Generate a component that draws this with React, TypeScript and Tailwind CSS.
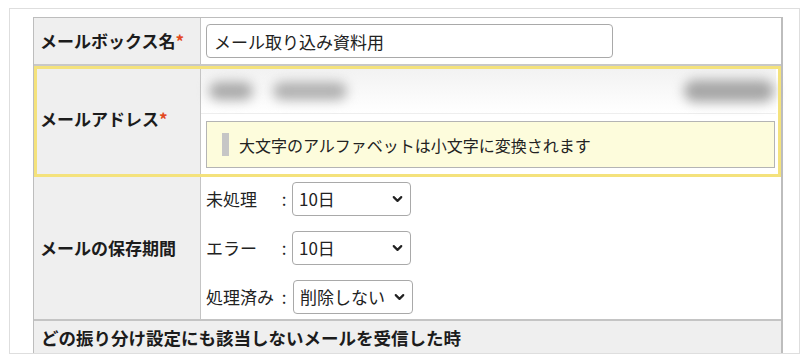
import { ChevronDown } from "lucide-react";

const font = { fontFamily: '"Noto Sans CJK JP", "Noto Sans", sans-serif' };

const Required = () => <span className="text-[#e2481e] font-bold">*</span>;

const PeriodSelect = ({ label, value, wide }: { label: string; value: string; wide?: boolean }) => (
    <div className="flex items-center h-[34px]">
        <span className="w-[72px] text-[17px] text-[#222] whitespace-nowrap">{label}</span>
        <span className="w-[12px] text-center text-[17px] text-[#222]">:</span>
        <div className={`relative h-[34px] ${wide ? "w-[120px] ml-[3px]" : "w-[119px] ml-[2px]"}`}>
            <select
                defaultValue={value}
                className="appearance-none w-full h-full border border-[#a9a9a9] rounded-[4px] bg-white pl-[6px] text-[17px] text-[#222] outline-none"
                style={font}
            >
                <option value={value}>{value}</option>
            </select>
            <ChevronDown className="absolute right-[6px] top-1/2 -translate-y-1/2 h-[15px] w-[15px] text-[#222] pointer-events-none" strokeWidth={3.5} />
        </div>
    </div>
);

const App = () => {
    return (
        <div className="min-h-screen bg-white pt-[8px] pl-[9px]" style={font}>
            {/* Card */}
            <div className="w-[791px] h-[346px] border border-[#dedede] overflow-hidden pl-[23px] pt-[8px]">
                <div className="w-[750px] border-l border-t border-r-2 border-[#bdbdbd]">
                    {/* Mailbox name */}
                    <div className="flex h-[48px] border-b-2 border-[#c8c8c8]">
                        <div className="w-[167px] shrink-0 bg-[#efefef] border-r border-[#c4c4c4] flex items-center pl-[6px] text-[17px] font-bold text-[#1c1c1c]">
                            メールボックス名<Required />
                        </div>
                        <div className="flex-1 flex items-center pl-[5px]">
                            <input
                                defaultValue="メール取り込み資料用"
                                className="w-[407px] h-[34px] border border-[#a9a9a9] rounded-[4px] px-[7px] text-[17px] text-[#222] outline-none"
                                style={font}
                            />
                        </div>
                    </div>

                    {/* Mail address (highlighted) */}
                    <div className="relative flex h-[111px]">
                        <div className="w-[167px] shrink-0 bg-[#efefef] border-r border-[#c4c4c4] flex items-center pl-[6px] pb-[6px] text-[17px] font-bold text-[#1c1c1c]">
                            メールアドレス<Required />
                        </div>
                        <div className="flex-1 flex flex-col pt-[3px]">
                            <div className="h-[45px] mr-[5px] bg-gradient-to-b from-[#f2f2f2] to-white border-b border-[#eeeeee] flex items-center pl-[8px]">
                                <div className="w-[44px] h-[18px] rounded-full bg-[#a9a9a9] blur-[6px]" />
                                <div className="w-[74px] h-[18px] ml-[20px] rounded-full bg-[#b0b0b0] blur-[6px]" />
                                <div className="flex-1" />
                                <div className="w-[90px] h-[22px] mr-[2px] rounded-full bg-[#a6a6a6] blur-[6px]" />
                            </div>
                            <div className="mt-[7px] ml-[5px] mr-[6px] h-[47px] bg-[#fdfcdc] border border-[#b4b4b4] flex items-center pl-[15px]">
                                <span className="w-[7px] h-[23px] bg-[#c6c6c6]" />
                                <span className="ml-[10px] text-[16px] text-[#222]">大文字のアルファベットは小文字に変換されます</span>
                            </div>
                        </div>
                        <div className="absolute inset-0 border-[3px] border-[#f4e27c] pointer-events-none" />
                    </div>

                    {/* Retention */}
                    <div className="flex h-[144px] border-b-2 border-[#c4c4c4]">
                        <div className="w-[167px] shrink-0 bg-[#efefef] border-r border-[#c4c4c4] flex items-center pl-[6px] text-[17px] font-bold text-[#1c1c1c]">
                            メールの保存期間
                        </div>
                        <div className="flex-1 flex flex-col gap-[15px] pt-[5px] pl-[5px]">
                            <PeriodSelect label="未処理" value="10日" />
                            <PeriodSelect label="エラー" value="10日" />
                            <PeriodSelect label="処理済み" value="削除しない" wide />
                        </div>
                    </div>

                    {/* Unmatched */}
                    <div className="h-[34px] bg-[#efefef] flex items-center pl-[7px] text-[17.5px] font-bold text-[#1c1c1c]">
                        どの振り分け設定にも該当しないメールを受信した時
                    </div>
                </div>
            </div>
        </div>
    );
};

export default App;
